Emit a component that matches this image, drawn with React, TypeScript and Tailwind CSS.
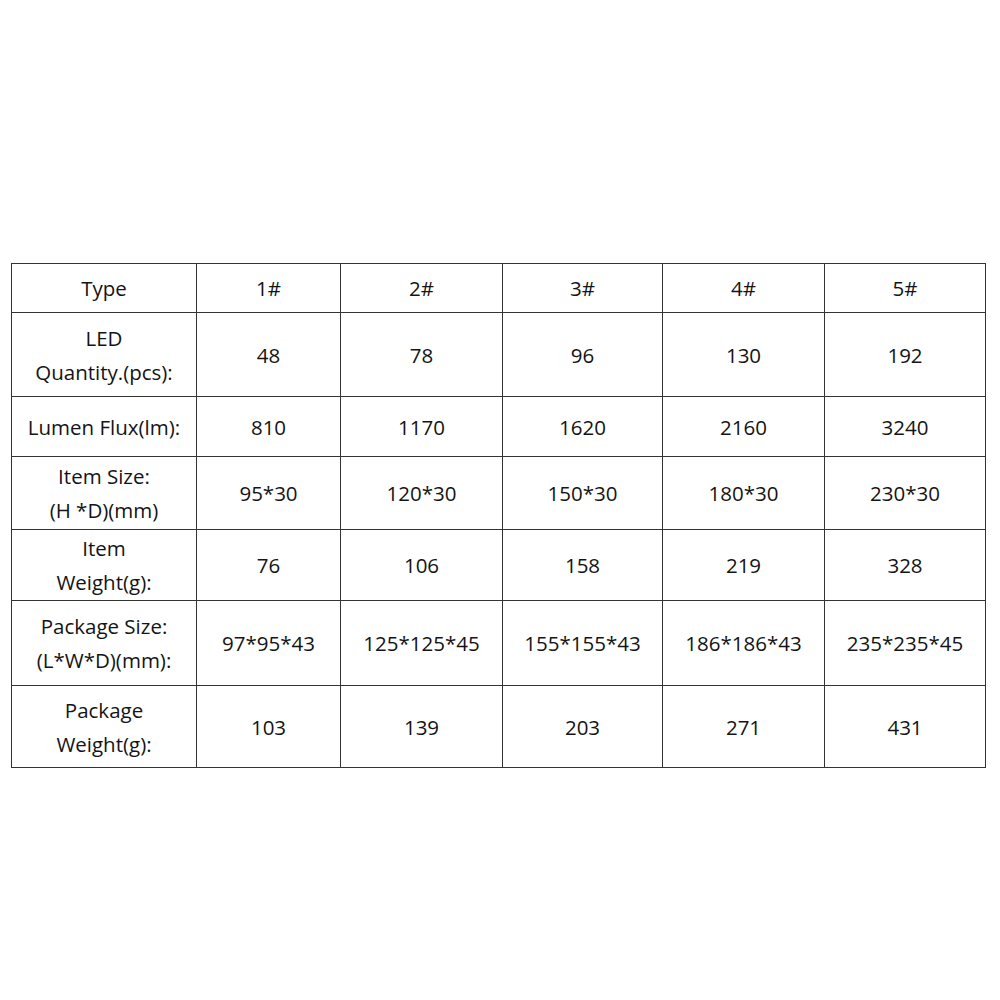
const colWidths = ["w-[185px]", "w-[144px]", "w-[162px]", "w-[160px]", "w-[162px]", "w-[161px]"];

type Row = {
  label: string[];
  values: string[];
  height: string;
};

const rows: Row[] = [
  { label: ["Type"], values: ["1#", "2#", "3#", "4#", "5#"], height: "h-[49px]" },
  { label: ["LED", "Quantity.(pcs):"], values: ["48", "78", "96", "130", "192"], height: "h-[84px]" },
  { label: ["Lumen Flux(lm):"], values: ["810", "1170", "1620", "2160", "3240"], height: "h-[60px]" },
  { label: ["Item Size:", "(H *D)(mm)"], values: ["95*30", "120*30", "150*30", "180*30", "230*30"], height: "h-[73px]" },
  { label: ["Item", "Weight(g):"], values: ["76", "106", "158", "219", "328"], height: "h-[71px]" },
  {
    label: ["Package Size:", "(L*W*D)(mm):"],
    values: ["97*95*43", "125*125*45", "155*155*43", "186*186*43", "235*235*45"],
    height: "h-[85px]",
  },
  { label: ["Package", "Weight(g):"], values: ["103", "139", "203", "271", "431"], height: "h-[82px]" },
];

export default function App() {
  return (
    <div className="w-[1000px] h-[1000px] bg-white pt-[263px] pl-[11px] font-['Open_Sans',sans-serif] text-[#141414]">
      <table className="border-collapse table-fixed w-[974px] text-[20.5px] leading-[34px]">
        <colgroup>
          {colWidths.map((w, i) => (
            <col key={i} className={w} />
          ))}
        </colgroup>
        <tbody>
          {rows.map((row, r) => (
            <tr key={r} className={row.height}>
              <td className="border-[1.5px] border-[#333333] text-center align-middle p-0">
                {row.label.map((l, i) => (
                  <div key={i}>{l}</div>
                ))}
              </td>
              {row.values.map((v, i) => (
                <td key={i} className="border-[1.5px] border-[#333333] text-center align-middle p-0">
                  {v}
                </td>
              ))}
            </tr>
          ))}
        </tbody>
      </table>
    </div>
  );
}
